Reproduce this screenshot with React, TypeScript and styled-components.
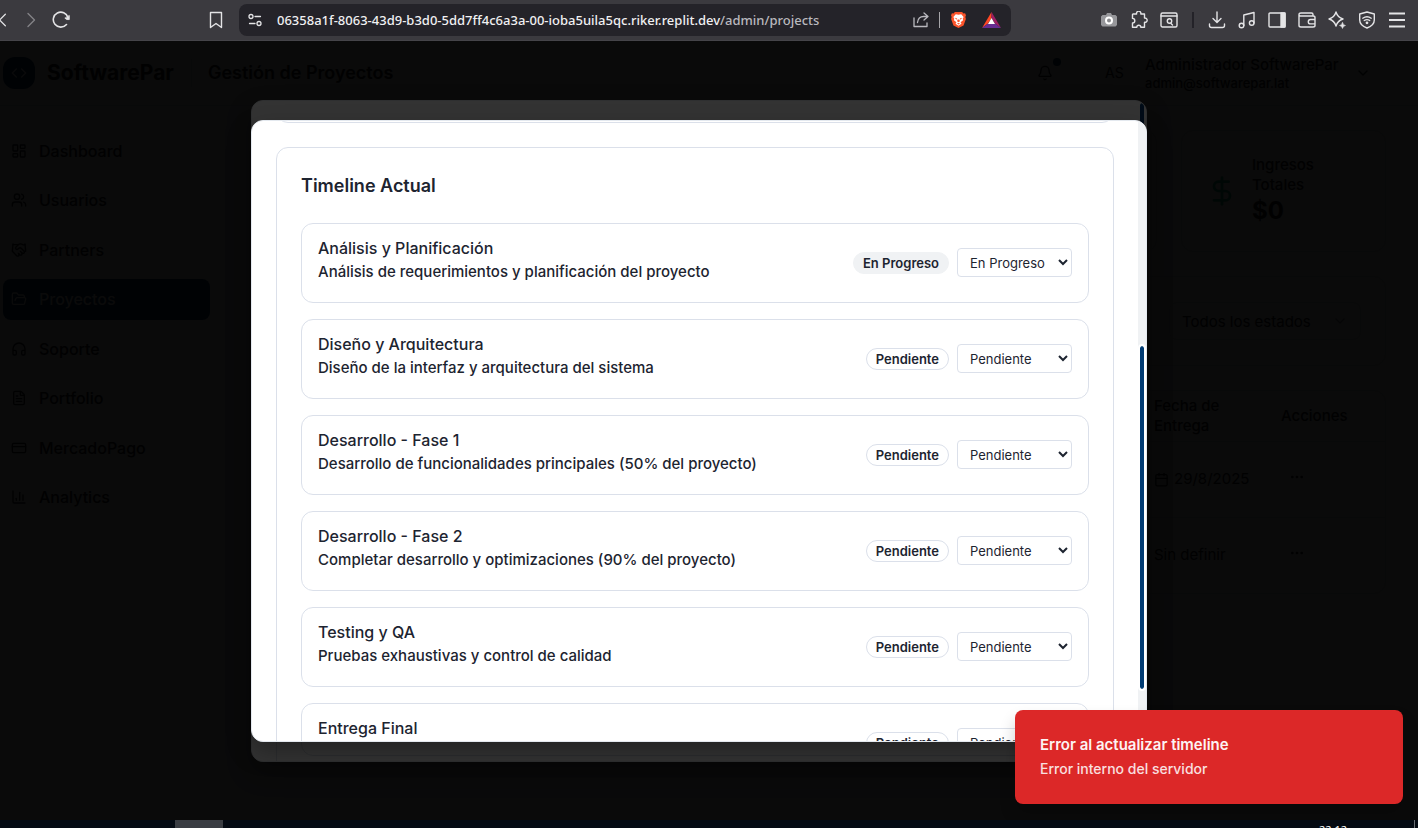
import React from 'react';
import styled, { createGlobalStyle } from 'styled-components';
import {
  LayoutDashboard, Users, Handshake, FolderOpen, Headphones, FileText, CreditCard, BarChart3,
  Code, Bell, ChevronDown, DollarSign, Calendar, MoreHorizontal,
} from 'lucide-react';

const ui = `Inter, "Liberation Sans", sans-serif`;
const system = `"Noto Sans", "Open Sans", sans-serif`;
const ink = '#1d2430';
const line = '#dbe0ea';

const GlobalStyle = createGlobalStyle`
  *, *::before, *::after { box-sizing: border-box; }
  body { margin: 0; background: #0a0a0a; color: ${ink}; font-family: ${ui}; }
  button, select, input { font-family: inherit; }
  h1, h2, h3, p, ul { margin: 0; padding: 0; }
`;

const Window = styled.div`
  display: flex;
  flex-direction: column;
  height: 100vh;
  overflow: hidden;
`;

/* Browser toolbar */
const Toolbar = styled.header`
  display: flex;
  align-items: center;
  flex: none;
  height: 41px;
  background: #3b3a3f;
  border-bottom: 1px solid #454449;
  color: #e4e4e6;
`;
const NavGroup = styled.div`
  display: flex;
  align-items: center;
  width: 239px;
  padding-right: 8px;
`;
const ToolGroup = styled.div`
  display: flex;
  align-items: center;
  justify-content: flex-end;
  width: 407px;
  padding-right: 6px;
`;
const IconButton = styled.button<{ $dim?: boolean }>`
  display: flex;
  align-items: center;
  justify-content: center;
  flex: none;
  width: 30px;
  height: 30px;
  padding: 0;
  border: 0;
  background: none;
  color: ${p => (p.$dim ? '#838287' : 'inherit')};
`;
const BackButton = styled(IconButton)`
  width: 16px;
  overflow: hidden;
  justify-content: flex-end;
`;
const Spacer = styled.div`
  flex: 1;
`;
const UrlBar = styled.div`
  display: flex;
  align-items: center;
  gap: 3px;
  flex: 1;
  min-width: 0;
  height: 32px;
  padding: 0 5px 0 1px;
  border-radius: 8px;
  background: #242329;
`;
const Url = styled.div`
  flex: 1;
  min-width: 0;
  padding-left: 4px;
  overflow: hidden;
  white-space: nowrap;
  font: 500 13px/20px ${system};
  color: #f0f0f2;
  span { color: #b9b8be; }
`;
const Divider = styled.span<{ $dark?: boolean }>`
  flex: none;
  width: ${p => (p.$dark ? 2 : 1)}px;
  height: 16px;
  background: ${p => (p.$dark ? '#232228' : '#a5a4a8')};
  margin: ${p => (p.$dark ? '0 8px' : '0')};
`;

/* Admin page */
const Viewport = styled.div`
  position: relative;
  flex: 1;
  min-height: 0;
  overflow: hidden;
  background: #fafbfc;
`;
const TopBar = styled.div`
  display: flex;
  align-items: center;
  height: 65px;
  padding: 0 47px 0 3px;
  background: #fbfbfb;
  border-bottom: 1px solid ${line};
`;
const LogoBox = styled.span`
  display: flex;
  align-items: center;
  justify-content: center;
  width: 32px;
  height: 32px;
  margin-right: 12px;
  border-radius: 12px;
  background: #003b73;
  color: #ffffff;
`;
const Brand = styled.span`
  padding-right: 17px;
  border-right: 1px solid ${line};
  font-size: 21px;
  font-weight: 700;
  line-height: 28px;
`;
const PageTitle = styled.h1`
  padding-left: 16px;
  font-size: 18px;
  font-weight: 600;
  line-height: 28px;
`;
const BellButton = styled(IconButton)`
  position: relative;
  color: ${ink};
  margin-right: 45px;
`;
const Dot = styled.span`
  position: absolute;
  top: 0;
  right: -1px;
  width: 8px;
  height: 8px;
  border-radius: 4px;
  background: #003b73;
`;
const Initials = styled.span`
  width: 40px;
  font-size: 14px;
  line-height: 20px;
`;
const Account = styled.div`
  width: 210px;
  font-size: 15px;
  font-weight: 500;
  line-height: 20px;
  white-space: nowrap;
  small { display: block; font-size: 13px; font-weight: 500; line-height: 16px; }
`;
const Shell = styled.div`
  display: flex;
`;
const Sidebar = styled.nav`
  display: flex;
  flex-direction: column;
  justify-content: space-between;
  flex: none;
  width: 210px;
  height: 412px;
  padding: 24px 0 0 3px;
`;
const NavItem = styled.a<{ $active?: boolean }>`
  display: flex;
  align-items: center;
  gap: 12px;
  height: 41px;
  padding: 0 8px;
  border-radius: 8px;
  font-size: 16px;
  font-weight: 500;
  text-decoration: none;
  color: ${p => (p.$active ? '#ffffff' : ink)};
  background: ${p => (p.$active ? '#003b73' : 'none')};
`;
const Main = styled.main`
  display: flex;
  flex-direction: column;
  gap: 24px;
  flex: 1;
  padding: 24px 32px 0 56px;
`;
const Row = styled.div`
  display: flex;
  gap: 24px;
`;
const Panel = styled.section`
  border: 1px solid ${line};
  border-radius: 12px;
  background: #fafafa;
`;
const StatPanel = styled(Panel)<{ $fill?: boolean }>`
  display: flex;
  align-items: center;
  gap: 14px;
  flex: ${p => (p.$fill ? '1' : '0 0 205px')};
  height: 122px;
  padding: 0 24px;
  font-size: 15px;
  font-weight: 500;
  line-height: 20px;
  strong { display: block; font-size: 24px; line-height: 32px; }
`;
const StatText = styled.p`
  width: 80px;
`;
const FilterPanel = styled(Panel)`
  display: flex;
  align-items: center;
  justify-content: flex-end;
  height: 90px;
  padding: 0 24px;
`;
const FilterButton = styled.button`
  display: flex;
  align-items: center;
  justify-content: space-between;
  width: 192px;
  height: 38px;
  padding: 0 12px;
  border: 1px solid ${line};
  border-radius: 8px;
  background: none;
  color: ${ink};
  font-size: 15px;
`;
const ProjectTable = styled.table`
  width: 100%;
  table-layout: fixed;
  border-collapse: collapse;
  font-size: 15px;
  line-height: 20px;
  th { height: 50px; padding: 0 16px; text-align: left; font-weight: 500; }
  td { height: 76px; padding: 0 16px; border-top: 1px solid ${line}; }
  th:nth-child(2) { width: 127px; }
  th:nth-child(3) { width: 120px; }
  td:nth-child(2) { padding-right: 0; }
  td:nth-child(3) { padding-left: 24px; }
`;
const DateCell = styled.span`
  display: flex;
  align-items: center;
  gap: 5px;
`;

/* Dialogs */
const Overlay = styled.div`
  position: absolute;
  inset: 0;
  display: flex;
  align-items: center;
  justify-content: center;
  padding: 1px 20px 0 0;
  background: rgba(0, 0, 0, 0.8);
`;
const Dialog = styled.div<{ $height: number }>`
  display: flex;
  width: 100%;
  max-width: 896px;
  height: ${p => p.$height}%;
  overflow: hidden;
  border: 1px solid #e4e9ef;
  border-radius: 12px;
  background: #ffffff;
  box-shadow: 0 10px 24px rgba(0, 0, 0, 0.3);
`;
const DialogBody = styled.div<{ $atEnd?: boolean }>`
  display: flex;
  flex-direction: column;
  justify-content: ${p => (p.$atEnd ? 'flex-end' : 'flex-start')};
  flex: 1;
  min-width: 0;
  padding: 0 24px;
  overflow: hidden;
`;
const Rail = styled.div<{ $top: number; $bare?: boolean }>`
  flex: none;
  width: 8px;
  padding: ${p => p.$top}px 2px 0;
  background: ${p => (p.$bare ? '#ffffff' : '#f0f2f4')};
`;
const Thumb = styled.div`
  height: 343px;
  border-radius: 2px;
  background: #003b73;
  outline: 2px solid #ffffff;
`;
const PreviousCard = styled.div`
  flex: none;
  height: 32px;
  margin: -30px 0 24px;
  border: 1px solid ${line};
  border-radius: 12px;
`;
const TimelineCard = styled.section`
  flex: none;
  padding: 24px;
  border: 1px solid ${line};
  border-radius: 12px;
`;
const CutCard = styled(TimelineCard)`
  margin-bottom: -20px;
`;
const CardTitle = styled.h2`
  padding-bottom: 23px;
  font-size: 18px;
  font-weight: 600;
  line-height: 28px;
`;
const Stages = styled.ul`
  display: flex;
  flex-direction: column;
  gap: 16px;
  list-style: none;
`;
const Stage = styled.li`
  display: flex;
  align-items: center;
  gap: 8px;
  height: 80px;
  padding: 0 16px;
  border: 1px solid ${line};
  border-radius: 12px;
`;
const StageText = styled.div`
  flex: 1;
  padding-bottom: 6px;
  h3 { font-size: 16px; font-weight: 500; line-height: 24px; }
  p { font-size: 15px; font-weight: 500; line-height: 24px; }
`;
const Badge = styled.span<{ $filled?: boolean }>`
  padding: 0 9px;
  border: 1px solid ${p => (p.$filled ? '#f0f2f4' : line)};
  border-radius: 11px;
  background: ${p => (p.$filled ? '#f0f2f4' : '#ffffff')};
  font-size: 13px;
  font-weight: 600;
  line-height: 20px;
`;
const StatusSelect = styled.select`
  width: 115px;
  height: 29px;
  padding: 0 8px;
  border: 1px solid ${line};
  border-radius: 4px;
  background: #ffffff;
  color: ${ink};
  font-size: 13px;
`;

const Toast = styled.div`
  position: absolute;
  right: 15px;
  bottom: 16px;
  width: 388px;
  padding: 23px 25px;
  border-radius: 8px;
  background: #dc2828;
  color: #fdf3f3;
  box-shadow: 0 10px 16px rgba(0, 0, 0, 0.2);
  line-height: 24px;
  strong { display: block; font-size: 15px; font-weight: 600; }
  p { font-size: 14px; font-weight: 500; opacity: 0.9; }
`;

/* Desktop task bar */
const Taskbar = styled.footer`
  display: flex;
  flex: none;
  height: 8px;
  padding: 0 3px 0 175px;
  overflow: hidden;
  background: #040a13;
`;
const TaskTile = styled.span`
  width: 48px;
  background: #3a3d43;
`;
const Clock = styled.time`
  padding: 2px 67px 0 0;
  border-right: 1px solid #6b6f75;
  font: 11px/16px ${system};
  color: #ffffff;
`;

const Glyph = ({ children, size = 18 }: { children: React.ReactNode; size?: number }) => (
  <svg width={size} height={size} viewBox="0 0 18 18" fill="none" stroke="currentColor" strokeWidth="1.4" strokeLinecap="round" strokeLinejoin="round" aria-hidden="true">
    {children}
  </svg>
);

const sections = [
  ['Dashboard', LayoutDashboard],
  ['Usuarios', Users],
  ['Partners', Handshake],
  ['Proyectos', FolderOpen],
  ['Soporte', Headphones],
  ['Portfolio', FileText],
  ['MercadoPago', CreditCard],
  ['Analytics', BarChart3],
] as const;

const stages = [
  ['Análisis y Planificación', 'Análisis de requerimientos y planificación del proyecto', 'En Progreso'],
  ['Diseño y Arquitectura', 'Diseño de la interfaz y arquitectura del sistema', 'Pendiente'],
  ['Desarrollo - Fase 1', 'Desarrollo de funcionalidades principales (50% del proyecto)', 'Pendiente'],
  ['Desarrollo - Fase 2', 'Completar desarrollo y optimizaciones (90% del proyecto)', 'Pendiente'],
  ['Testing y QA', 'Pruebas exhaustivas y control de calidad', 'Pendiente'],
  ['Entrega Final', '', 'Pendiente'],
];

function BrowserBar() {
  return (
    <Toolbar>
      <NavGroup>
        <BackButton aria-label="Atrás"><Glyph><path d="M6 2.500-.5 9 6 15.500" /></Glyph></BackButton>
        <IconButton $dim aria-label="Adelante"><Glyph><path d="M6 2.500 12.500 9 6 15.500" /></Glyph></IconButton>
        <IconButton aria-label="Recargar">
          <Glyph><path d="M14.500 13.500A7.500 7.500 0 1 1 16 6.500" strokeWidth="1.600" /><path d="M17.300 4.800v3.800q-2.600.6-4.200-1.200z" fill="currentColor" stroke="currentColor" strokeWidth="0.800" /></Glyph>
        </IconButton>
        <Spacer />
        <IconButton aria-label="Marcador"><Glyph><path d="M3.500 1.500h11v15L9 12.500l-5.500 4z" /></Glyph></IconButton>
      </NavGroup>
      <UrlBar>
        <IconButton aria-label="Información del sitio">
          <Glyph><g strokeWidth="1.300"><circle cx="5" cy="5.500" r="2" /><path d="M9 5.500h5.500M3.500 12.500H9" /><circle cx="13" cy="12.500" r="2" /></g></Glyph>
        </IconButton>
        <Url>06358a1f-8063-43d9-b3d0-5dd7ff4c6a3a-00-ioba5uila5qc.riker.replit.dev<span>/admin/projects</span></Url>
        <IconButton aria-label="Compartir">
          <Glyph><g stroke="#b9b8be" strokeWidth="1.300"><path d="M2 7v8.500h13V12" /><path d="M5.500 11.500c.5-4 3-6 6-6H15M12 2l4 3.500L12 9" /></g></Glyph>
        </IconButton>
        <Divider />
        <IconButton aria-label="Escudos">
          <svg width="17" height="18" viewBox="0 0 18 20" aria-hidden="true">
            <path fill="#fb542b" d="M5 1h8l1.500 1.700 1.800-.2 1 2.200-.7 2 .6 2.300-2.600 7L9 19l-5.600-3-2.600-7 .6-2.300-.7-2 1-2.200 1.800.2z" />
            <path fill="#fff" d="M9 4.200l3-.6 2.700 3-1 2 .4 1.700-2.800 2.300 1 1.600L9 16.300l-3.300-2.100 1-1.600-2.800-2.300.4-1.700-1-2 2.700-3z" />
            <path fill="#fb542b" d="M4.800 7.400l2.800 1-.8 1.200zM13.200 7.400l-2.800 1 .8 1.200zM8 9.500h2l.6 2L9 12.600l-1.600-1.100zM7.300 14 9 13.300l1.700.7L9 15z" />
          </svg>
        </IconButton>
        <IconButton aria-label="Recompensas">
          <svg width="19" height="17" viewBox="0 0 19 17" aria-hidden="true">
            <path fill="#ff4724" d="M9.500 0v6L6 11.500 0 16z" />
            <path fill="#9e1f63" d="M9.500 0 19 16l-6-4.500L9.500 6z" />
            <path fill="#662d91" d="M0 16l6-4.500h7L19 16z" />
            <path fill="#fff" d="M9.500 6 13 12H6z" />
          </svg>
        </IconButton>
      </UrlBar>
      <ToolGroup>
        <IconButton aria-label="Captura">
          <svg width="16" height="14" viewBox="0 0 16 14" aria-hidden="true"><path fill="#97979b" d="M1.500 2H5l1-2h4l1 2h3.500L16 3.500V12l-1.500 1.500h-13L0 12V3.500z" /><circle cx="8" cy="7.500" r="3" fill="#8a8a8e" stroke="#fff" strokeWidth="2" /></svg>
        </IconButton>
        <IconButton aria-label="Extensiones"><Glyph><path d="M3 3h3.600a2.200 2.200 0 1 1 4.200 0H14.500v4a2.200 2.200 0 1 1 0 4.300V16.300H10.800a2 2 0 0 0-4 0H2.500V12a2.100 2.100 0 0 0 0-4.600V3.500z" /></Glyph></IconButton>
        <IconButton aria-label="Buscar pestañas"><Glyph><rect x="1" y="2" width="16" height="14" rx="1.500" /><path d="M1 5h16M11 12.500l1.500 1.500" /><circle cx="9.500" cy="10" r="2.200" /></Glyph></IconButton>
        <Divider $dark />
        <IconButton aria-label="Descargas"><Glyph><path d="M9 1v10M5 7.500 9 11.500l4-4M1.500 13v1.500q0 2 2 2h11q2 0 2-2V13" /></Glyph></IconButton>
        <IconButton aria-label="Multimedia"><Glyph><circle cx="3.500" cy="14.500" r="2.300" /><circle cx="13.700" cy="12" r="2.300" /><path d="M5.800 14.500V4L16 1.500V12" /></Glyph></IconButton>
        <IconButton aria-label="Barra lateral"><Glyph><rect x="1" y="2" width="16" height="14" rx="1" /><path d="M13 2h4v14h-4z" fill="currentColor" /></Glyph></IconButton>
        <IconButton aria-label="Cartera"><Glyph><path d="M15 5V3.500Q15 2 13.500 2H3Q1 2 1 3.500v11Q1 16 3 16h12q2 0 2-1.500v-8Q17 5 15 5H3Q1 5 1 3.500M17 8.500h-4.500a2.200 2.200 0 0 0 0 4.400H17" /></Glyph></IconButton>
        <IconButton aria-label="Asistente"><Glyph><path d="M8 1q1.600 5.400 7 7-5.400 1.600-7 7-1.600-5.400-7-7 5.400-1.600 7-7z" /><path d="M14.500 11.500q.5 2.500 3 3-2.500.5-3 3-.5-2.500-3-3 2.500-.5 3-3z" fill="currentColor" strokeWidth="0.500" /></Glyph></IconButton>
        <IconButton aria-label="VPN"><Glyph><path d="M9 1l7.300 2v6c0 4-3.300 6.500-7.300 8-4-1.500-7.300-4-7.300-8V3z" /><path d="M4.800 7.200q4.200-3 8.400 0M6.300 9.500q2.700-1.800 5.400 0" /><circle cx="9" cy="11.800" r=".7" fill="currentColor" /></Glyph></IconButton>
        <IconButton aria-label="Menú"><Glyph><path d="M1 2.500h16M1 9h16M1 15.500h16" strokeLinecap="butt" strokeWidth="1.800" /></Glyph></IconButton>
      </ToolGroup>
    </Toolbar>
  );
}

function AdminPage() {
  return (
    <>
      <TopBar>
        <LogoBox><Code size={16} /></LogoBox>
        <Brand>SoftwarePar</Brand>
        <PageTitle>Gestión de Proyectos</PageTitle>
        <Spacer />
        <BellButton aria-label="Notificaciones"><Bell size={16} /><Dot /></BellButton>
        <Initials>AS</Initials>
        <Account>Administrador SoftwarePar<small>admin@softwarepar.lat</small></Account>
        <ChevronDown size={16} />
      </TopBar>
      <Shell>
        <Sidebar>
          {sections.map(([name, Icon]) => (
            <NavItem key={name} href="#" $active={name === 'Proyectos'}><Icon size={16} />{name}</NavItem>
          ))}
        </Sidebar>
        <Main>
          <Row>
            <StatPanel $fill />
            <StatPanel>
              <DollarSign size={32} color="#10b981" />
              <StatText>Ingresos Totales<strong>$0</strong></StatText>
            </StatPanel>
          </Row>
          <FilterPanel>
            <FilterButton>Todos los estados<ChevronDown size={16} opacity={0.5} /></FilterButton>
          </FilterPanel>
          <Panel>
            <ProjectTable>
              <thead><tr><th /><th>Fecha de Entrega</th><th>Acciones</th></tr></thead>
              <tbody>
                <tr><td /><td><DateCell><Calendar size={15} />29/8/2025</DateCell></td><td><MoreHorizontal size={16} /></td></tr>
                <tr><td /><td>Sin definir</td><td><MoreHorizontal size={16} /></td></tr>
              </tbody>
            </ProjectTable>
          </Panel>
        </Main>
      </Shell>
    </>
  );
}

function TimelineDialog() {
  return (
    <Dialog $height={80} role="dialog" aria-labelledby="timeline-title">
      <DialogBody>
        <PreviousCard />
        <TimelineCard>
          <CardTitle id="timeline-title">Timeline Actual</CardTitle>
          <Stages>
            {stages.map(([name, text, status]) => (
              <Stage key={name}>
                <StageText><h3>{name}</h3><p>{text || '\u00a0'}</p></StageText>
                <Badge $filled={status === 'En Progreso'}>{status}</Badge>
                <StatusSelect aria-label={name} defaultValue={status}>
                  <option>{status}</option>
                </StatusSelect>
              </Stage>
            ))}
          </Stages>
        </TimelineCard>
      </DialogBody>
      <Rail $top={225}><Thumb /></Rail>
    </Dialog>
  );
}

function ProjectDialog() {
  return (
    <Dialog $height={85}>
      <DialogBody $atEnd>
        <CutCard><Stages><Stage /></Stages></CutCard>
      </DialogBody>
      <Rail $top={2} $bare><Thumb /></Rail>
    </Dialog>
  );
}

export default function App() {
  return (
    <Window>
      <GlobalStyle />
      <BrowserBar />
      <Viewport>
        <AdminPage />
        <Overlay><ProjectDialog /></Overlay>
        <Overlay><TimelineDialog /></Overlay>
        <Toast role="alert">
          <strong>Error al actualizar timeline</strong>
          <p>Error interno del servidor</p>
        </Toast>
      </Viewport>
      <Taskbar><TaskTile /><Spacer /><Clock>22:12</Clock></Taskbar>
    </Window>
  );
}
